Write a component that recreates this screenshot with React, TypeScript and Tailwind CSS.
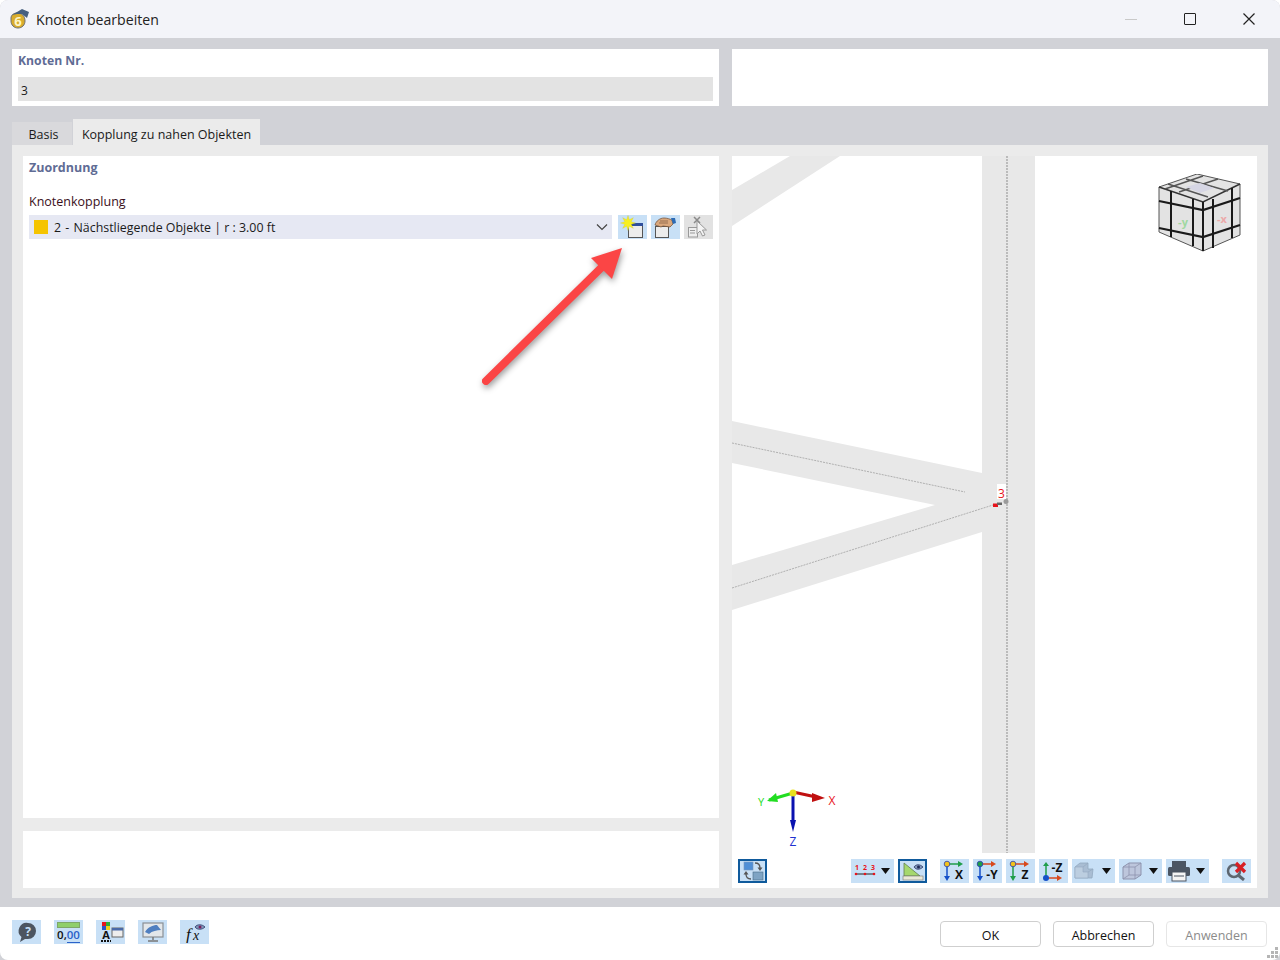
import React from 'react';

const FONT = 'font-["Open_Sans","Noto_Sans",sans-serif]';

const IconBtn = ({ children, w = 'w-[29px]', boxed = false, grey = false }: { children: React.ReactNode; w?: string; boxed?: boolean; grey?: boolean }) => (
  <div className={`${w} h-6 shrink-0 flex items-center justify-center ${grey ? 'bg-[#e2e2e2]' : 'bg-[#c8e0f6]'} ${boxed ? 'border-2 border-[#0f5a9c]' : ''}`}>
    {children}
  </div>
);

const Caret = () => (
  <svg width="9" height="6" viewBox="0 0 9 6" className="shrink-0">
    <path d="M0 0h9L4.500 6z" fill="#111" />
  </svg>
);

const AppLogo = () => (
  <svg width="22" height="22" viewBox="0 0 22 22" className="-ml-[1px]">
    <path d="M3 10c0-3 3-5 6-5 5 0 8 3 8 8 0 4-3 7-7 7-4 0-7-3-7-7z" fill="#d9ad2c" stroke="#6f6f6f" strokeWidth="1" />
    <path d="M4 7 L14 1 L21 4 L19 10 L14 6 L9 6 Z" fill="#47607f" />
    <text x="10" y="18" textAnchor="middle" fontSize="13" fontWeight="700" fill="#fff6c8" fontFamily="Open Sans">6</text>
  </svg>
);

const NewIcon = () => (
  <svg width="29" height="24" viewBox="0 0 29 24">
    <rect x="10.500" y="8.500" width="14" height="14" fill="#ececec" stroke="#555" />
    <rect x="13" y="8" width="12" height="3" fill="#2f4f9c" />
    <path d="M17.500 8L13.200 9.300L15.300 13.300L11.300 11.200L10 15.500L8.700 11.200L4.700 13.300L6.800 9.300L2.500 8L6.800 6.700L4.700 2.700L8.700 4.800L10 .5L11.300 4.800L15.300 2.700L13.200 6.700Z" fill="#f8f020" stroke="#c9c230" strokeWidth=".3" />
  </svg>
);

const EditIcon = () => (
  <svg width="29" height="24" viewBox="0 0 29 24">
    <rect x="4.500" y="11.500" width="13" height="11" fill="#ececec" stroke="#555" />
    <path d="M4 10c1-4 5-7 9-7 3 0 6 1 8 2l1 4-3 3-7-1-2 1z" fill="#d9a77c" stroke="#6b4a32" strokeWidth=".7" />
    <path d="M8 8h9M9 6h8" stroke="#6b4a32" strokeWidth=".6" />
    <path d="M20 3h4l1 5-3 1z" fill="#2c6bb5" />
  </svg>
);

const DelIcon = () => (
  <svg width="29" height="24" viewBox="0 0 29 24">
    <path d="M10 2l6 6M16 2l-6 6" stroke="#8a8a8a" strokeWidth="1.500" />
    <rect x="4.500" y="12.500" width="9" height="9.500" fill="#eee" stroke="#999" />
    <path d="M6 15.500h5M6 18h5" stroke="#999" />
    <path d="M13 6l0 13 3-3 2.500 5 2.500-1-2.500-5h4z" fill="#f4f4f4" stroke="#999" />
  </svg>
);

// axis icon: origin dot, horizontal + vertical arrows and a letter
const AxisIcon = ({ label, up, dot, h, v }: { label: string; up?: boolean; dot: string; h: string; v: string }) => (
  <svg width="27" height="22" viewBox="1 0 27 22">
    {up ? (
      <>
        <path d="M7 18V5" stroke={v} strokeWidth="1.500" />
        <path d="M4 6l3-4 3 4z" fill={v} />
        <path d="M7 18h12" stroke={h} strokeWidth="1.500" />
        <path d="M18 15l5 3-5 3z" fill={h} />
        <circle cx="7" cy="18" r="3" fill={dot} />
      </>
    ) : (
      <>
        <path d="M7 4v14" stroke={v} strokeWidth="1.500" />
        <path d="M4 16l3 5 3-5z" fill={v} />
        <path d="M7 4h12" stroke={h} strokeWidth="1.500" />
        <path d="M18 1l5 3-5 3z" fill={h} />
        <circle cx="7" cy="4" r="2.800" fill={dot} stroke="#2a3fb0" strokeWidth=".8" />
      </>
    )}
    <text x={up ? 18 : 19} y={up ? 12 : 19} textAnchor="middle" fontSize="12" fontWeight="700" fill="#111" fontFamily="Open Sans">{label}</text>
  </svg>
);

const Viewport = () => (
  <svg className="absolute inset-0" width="525" height="732" viewBox="732 156 525 732">
    <g fill="#e8e8e8">
      <path d="M732 190L790 156H840L732 226Z" />
      <path d="M982 156H1035V853H982Z" />
      <path d="M732 421L982 473V532L732 610V565L935 505L732 463Z" />
    </g>
    <path d="M1007 156V853" stroke="#8d8d8d" strokeWidth="1" strokeDasharray="2 1" />
    <path d="M732 443L965 492" stroke="#b0b0b0" strokeWidth="1" strokeDasharray="2 1" />
    <path d="M732 588L993 505" stroke="#b0b0b0" strokeWidth="1" strokeDasharray="2 1" />
    <rect x="997" y="484" width="9" height="15" fill="#fff" />
    <text x="1001.500" y="498" textAnchor="middle" fontSize="12" fill="#e8141c" fontFamily="Open Sans">3</text>
    <rect x="993" y="503.500" width="5" height="3.500" fill="#e8141c" />
    <rect x="997" y="502.500" width="5" height="2.500" fill="#666" />
    <circle cx="1006" cy="501.500" r="2.500" fill="#9b9b9b" />
  </svg>
);

const Cube = () => (
  <svg className="absolute left-[426px] top-[18px]" width="84" height="80" viewBox="0 0 84 80">
    <path d="M1 13L39 0L82 10V61L45 77L1 58Z" fill="#e3e3e3" stroke="#555" strokeWidth="1" />
    <path d="M1 13L45 28L82 10" fill="none" stroke="#333" strokeWidth="1.500" />
    <path d="M10 10L50 23M28 5L70 17M21 18L60 5M7 15L45 2" stroke="#555" strokeWidth="1.400" />
    <path d="M28 13l14-4 14 5-14 5z" fill="#d6d6e4" />
    <path d="M13 17V63M35 25V72M45 28V77M55 25V74M74 14V64" stroke="#1a1a1a" strokeWidth="2" />
    <path d="M1 27L45 36L82 24M1 54L45 63L82 51" fill="none" stroke="#1a1a1a" strokeWidth="2.200" />
    <text x="25" y="52" textAnchor="middle" fontSize="11" fontWeight="700" fill="#9fd8a0" fontFamily="Open Sans">-y</text>
    <text x="64" y="49" textAnchor="middle" fontSize="11" fontWeight="700" fill="#eca9a9" fontFamily="Open Sans">-x</text>
  </svg>
);

const AxisCross = () => (
  <svg className="absolute left-[22px] top-[628px]" width="90" height="68" viewBox="0 0 90 68">
    <path d="M39 9L15 16" stroke="#22dd22" strokeWidth="3" />
    <path d="M22 9L13 17L24 18Z" fill="#22dd22" />
    <path d="M39 8L62 13" stroke="#c01010" strokeWidth="3" />
    <path d="M58 9L71 14L58 18Z" fill="#c01010" />
    <path d="M39 9V40" stroke="#0a12b0" strokeWidth="3" />
    <path d="M36 36L39 48L42 36Z" fill="#0a12b0" />
    <circle cx="39" cy="9" r="3.500" fill="#e8e020" />
    <text x="7" y="22" textAnchor="middle" fontSize="11" fill="#22dd22" fontFamily="Open Sans">Y</text>
    <text x="78" y="21" textAnchor="middle" fontSize="12" fill="#e8141c" fontFamily="Open Sans">X</text>
    <text x="39" y="62" textAnchor="middle" fontSize="12" fill="#2030d0" fontFamily="Open Sans">Z</text>
  </svg>
);

const Toolbar = () => (
  <div className="absolute left-[6px] bottom-[5px] flex items-center">
    <IconBtn boxed>
      <svg width="24" height="20" viewBox="0 0 24 20">
        <rect x="3" y="1" width="9" height="8" fill="#4f8fd6" stroke="#7a98bd" strokeWidth=".6" />
        <rect x="12" y="11" width="10" height="8" fill="#7fa4c4" stroke="#496b88" strokeWidth=".6" />
        <path d="M14 2c4 0 5 2 5 5" fill="none" stroke="#555" strokeWidth="1.300" />
        <path d="M16.500 6.500h5L19 10z" fill="#555" />
        <path d="M10 18c-4 0-5-2-5-5" fill="none" stroke="#555" strokeWidth="1.300" />
        <path d="M2.500 13.500h5L5 10z" fill="#555" />
      </svg>
    </IconBtn>
    <div className="ml-[84px]">
      <IconBtn w="w-[43px]">
        <div className="flex items-center gap-[5px] pr-[2px]">
          <svg width="22" height="14" viewBox="0 0 22 14">
            <path d="M1 10h20" stroke="#222" />
            <circle cx="2" cy="10" r="1.300" fill="#e8141c" />
            <circle cx="11" cy="10" r="1.300" fill="#e8141c" />
            <circle cx="20" cy="10" r="1.300" fill="#e8141c" />
            <text x="3" y="6" textAnchor="middle" fontSize="7" fontWeight="700" fill="#e8141c">1</text>
            <text x="11" y="6" textAnchor="middle" fontSize="7" fontWeight="700" fill="#e8141c">2</text>
            <text x="19" y="6" textAnchor="middle" fontSize="7" fontWeight="700" fill="#e8141c">3</text>
          </svg>
          <Caret />
        </div>
      </IconBtn>
    </div>
    <div className="ml-1">
      <IconBtn boxed>
        <svg width="24" height="20" viewBox="0 0 24 20">
          <path d="M3 2L19 15H3Z" fill="#a5d86e" stroke="#5f7f50" strokeWidth=".8" />
          <rect x="2" y="15" width="20" height="4" fill="#e9e9d8" stroke="#777" strokeWidth=".6" />
          <path d="M13 6c2-3 6-3 9 0-3 3-7 3-9 0z" fill="#8095b8" stroke="#2a3a6a" strokeWidth=".8" />
          <circle cx="17.500" cy="6" r="1.500" fill="#1e2a55" />
        </svg>
      </IconBtn>
    </div>
    <div className="ml-[13px] flex gap-1">
      <IconBtn><AxisIcon label="X" dot="#f2c21a" h="#1f9e4a" v="#1450c8" /></IconBtn>
      <IconBtn><AxisIcon label="-Y" dot="#1f9e4a" h="#d8481c" v="#1450c8" /></IconBtn>
      <IconBtn><AxisIcon label="Z" dot="#f2c21a" h="#d8481c" v="#1f9e4a" /></IconBtn>
      <IconBtn><AxisIcon label="-Z" up dot="#1450c8" h="#d8481c" v="#1f9e4a" /></IconBtn>
      <IconBtn w="w-[43px]">
        <div className="flex items-center gap-[5px] pr-1">
          <svg width="24" height="20" viewBox="0 0 24 20">
            <path d="M2 6l5-4h8v6h5l-1 9H2z" fill="#a9bdd3" stroke="#93a9c0" strokeWidth=".8" />
            <path d="M2 6h8v5h5v6H2z" fill="#bccee0" stroke="#93a9c0" strokeWidth=".6" />
            <path d="M10 6l5-4M15 11l5-3" stroke="#93a9c0" strokeWidth=".7" />
          </svg>
          <Caret />
        </div>
      </IconBtn>
      <IconBtn w="w-[43px]">
        <div className="flex items-center gap-[5px] pr-1">
          <svg width="24" height="20" viewBox="0 0 24 20">
            <path d="M3 6l6-4h12v12l-6 4H3z" fill="#bdc6dc" stroke="#8d93ad" />
            <path d="M3 6h12v12M15 6l6-4M3 18l6-4h12M9 2v12" fill="none" stroke="#8d93ad" strokeWidth=".8" />
          </svg>
          <Caret />
        </div>
      </IconBtn>
      <IconBtn w="w-[43px]">
        <div className="flex items-center gap-[5px] pr-1">
          <svg width="24" height="22" viewBox="0 0 24 22">
            <rect x="5" y="1" width="14" height="6" fill="#4b5563" />
            <rect x="1" y="7" width="22" height="9" rx="1.500" fill="#4b5563" />
            <rect x="5" y="12" width="14" height="9" fill="#f5f5f5" stroke="#4b5563" />
            <path d="M7 16h10" stroke="#4b5563" />
          </svg>
          <Caret />
        </div>
      </IconBtn>
    </div>
    <div className="ml-[13px]">
      <IconBtn>
        <svg width="24" height="20" viewBox="0 0 24 20">
          <circle cx="9" cy="10" r="6" fill="none" stroke="#5d6670" strokeWidth="2.500" />
          <path d="M13 14l6 5" stroke="#5d6670" strokeWidth="3" />
          <path d="M11 2l9 9M20 2l-9 9" stroke="#d81f26" strokeWidth="3.200" />
        </svg>
      </IconBtn>
    </div>
  </div>
);

const Arrow = () => (
  <svg className="absolute left-[470px] top-[240px] pointer-events-none drop-shadow-[1px_3px_3px_rgba(0,0,0,0.4)]" width="170" height="155" viewBox="470 240 170 155">
    <path d="M486 381L603 266" stroke="#fb4545" strokeWidth="8" strokeLinecap="round" />
    <path d="M622 248L612 279L591 258Z" fill="#fb4545" />
  </svg>
);

const DialogButton = ({ children, disabled }: { children: React.ReactNode; disabled?: boolean }) => (
  <button className={`w-[101px] h-[26px] pt-1 rounded-[4px] border text-[12.500px] bg-white ${disabled ? 'border-[#e6e6e6] text-[#8b8b8b]' : 'border-[#cfcfcf] text-[#111]'}`}>
    {children}
  </button>
);

export default function App() {
  return (
    <div className={`${FONT} relative w-[1280px] h-[960px] flex flex-col overflow-hidden rounded-t-lg bg-[#d1d2d7] text-[13px] text-[#1a1a1a]`}>
      {/* Title bar */}
      <div className="h-[38px] shrink-0 bg-[#f3f4f9] flex items-center pl-[9px] pr-[2px]">
        <AppLogo />
        <span className="ml-[6px] pt-[1px] text-[14.100px] text-[#222]">Knoten bearbeiten</span>
        <div className="ml-auto flex items-center text-[#222]">
          <div className="w-[59px] flex justify-center">
            <div className="w-3 h-px bg-[#c9c9c9]" />
          </div>
          <div className="w-[59px] flex justify-center">
            <div className="w-3 h-3 border-[1.5px] border-[#222] rounded-[1px]" />
          </div>
          <div className="w-[59px] flex justify-center">
            <svg width="12" height="12" viewBox="0 0 12 12">
              <path d="M.5.5l11 11M11.500.5l-11 11" stroke="#222" strokeWidth="1.200" />
            </svg>
          </div>
        </div>
      </div>

      {/* Body */}
      <div className="flex-1 min-h-0 flex flex-col px-3 pt-[11px] pb-[9px]">
        <div className="h-[57px] shrink-0 flex gap-[13px]">
          <div className="w-[707px] bg-white px-[6px] pt-[3px]">
            <div className="h-[18px] leading-[18px] font-bold text-[12.200px] text-[#5f6c95]">Knoten Nr.</div>
            <div className="mt-[7px] h-6 leading-[27px] bg-[#e3e3e3] px-[3px] text-[12px]">3</div>
          </div>
          <div className="flex-1 bg-white" />
        </div>

        {/* Tabs */}
        <div className="h-[26px] mt-[13px] shrink-0 flex items-end text-[12.500px]">
          <div className="w-[60px] h-[23px] leading-[25px] bg-[#d9d9dc] text-center pl-[3px]">Basis</div>
          <div className="ml-[1px] w-[187px] h-[26px] leading-[31px] bg-[#ebebeb] text-center">Kopplung zu nahen Objekten</div>
        </div>

        <div className="flex-1 min-h-0 bg-[#ebebeb] pl-[11px] pr-[11px] pt-[11px] pb-[10px] flex gap-[13px]">
          <div className="w-[696px] flex flex-col gap-[13px]">
            <div className="flex-1 bg-white pl-[6px] pr-[6px]">
              <div className="h-6 leading-[23px] font-bold text-[12.500px] text-[#5f6c95]">Zuordnung</div>
              <div className="mt-[11px] h-[21px] leading-[21px] text-[12.500px] text-[#3a0f1a]">Knotenkopplung</div>
              <div className="mt-[3px] flex items-center">
                <div className="w-[583px] h-6 bg-[#e6e8f3] flex items-center pl-[5px] pr-[4px]">
                  <div className="w-[14px] h-[14px] bg-[#f5c400]" />
                  <span className="ml-[6px] pt-[2px] text-[12.400px] whitespace-pre"><span className="[word-spacing:1px]">2 - </span>Nächstliegende Objekte | r : 3.00 ft</span>
                  <svg className="ml-auto" width="12" height="8" viewBox="0 0 12 8">
                    <path d="M1 1.500l5 5 5-5" fill="none" stroke="#444" strokeWidth="1.200" />
                  </svg>
                </div>
                <div className="ml-[6px] flex gap-1">
                  <IconBtn><NewIcon /></IconBtn>
                  <IconBtn><EditIcon /></IconBtn>
                  <IconBtn grey><DelIcon /></IconBtn>
                </div>
              </div>
            </div>
            <div className="h-[57px] shrink-0 bg-white" />
          </div>
          <div className="relative flex-1 bg-white overflow-hidden">
            <Viewport />
            <Cube />
            <AxisCross />
            <Toolbar />
          </div>
        </div>
      </div>

      {/* Footer */}
      <div className="h-[53px] shrink-0 bg-white flex items-center pl-3 pr-[13px] rounded-b-lg">
        <div className="flex gap-[13px] -mt-[3px]">
          <IconBtn>
            <svg width="22" height="22" viewBox="0 0 22 22">
              <path d="M12 2a8 8 0 0 1 0 16H9l-5 3 1.500-5A8 8 0 0 1 12 2z" fill="#4d5560" />
              <text x="12" y="15" textAnchor="middle" fontSize="12" fontWeight="700" fill="#c8e0f6" fontFamily="Open Sans">?</text>
            </svg>
          </IconBtn>
          <IconBtn>
            <div className="w-[26px] flex flex-col items-center">
              <div className="w-[23px] h-[6px] bg-[#8fcf6a] border border-[#7ea768]" />
              <div className="text-[11.500px] leading-[14px] font-semibold text-[#111]">0,<span className="text-[#2b62c9] border-b border-[#2b62c9]">00</span></div>
            </div>
          </IconBtn>
          <IconBtn>
            <svg width="26" height="22" viewBox="0 0 26 22">
              <rect x="4" y="1" width="4" height="4" fill="#e8141c" />
              <rect x="8" y="1" width="4" height="4" fill="#2fae3a" />
              <rect x="4" y="5" width="4" height="4" fill="#2c55c8" />
              <rect x="8" y="5" width="4" height="4" fill="#f2d21a" />
              <text x="8" y="18" textAnchor="middle" fontSize="11" fontWeight="700" fill="#111" fontFamily="Open Sans">A</text>
              <rect x="14" y="7" width="11" height="9" fill="#eee" stroke="#666" />
              <rect x="14" y="7" width="11" height="2.500" fill="#4a6aa8" />
              <path d="M3 20h10" stroke="#111" strokeWidth="2" strokeDasharray="2 1" />
            </svg>
          </IconBtn>
          <IconBtn>
            <svg width="26" height="22" viewBox="0 0 26 22">
              <rect x="3" y="2" width="20" height="14" fill="#e3e7ea" stroke="#8a8f94" strokeWidth="1.200" />
              <path d="M5 11c3-5 8-7 12-7l4 5c-4 0-9 1-12 4z" fill="#4f7fc0" />
              <path d="M13 16v3M8 20h10" stroke="#777" strokeWidth="1.500" />
            </svg>
          </IconBtn>
          <IconBtn>
            <svg width="26" height="22" viewBox="0 0 26 22">
              <text x="4" y="19" fontSize="17" fontStyle="italic" fill="#111" fontFamily="Liberation Serif">f</text>
              <text x="11" y="19" fontSize="14" fontStyle="italic" fill="#111" fontFamily="Liberation Serif">x</text>
              <path d="M13 6c2-3 7-3 10 0-3 3-8 3-10 0z" fill="#8095b8" stroke="#2a3a6a" strokeWidth=".8" />
              <circle cx="18" cy="6" r="1.500" fill="#7a1f5c" />
            </svg>
          </IconBtn>
        </div>
        <div className="ml-auto flex gap-3 mt-[1px]">
          <DialogButton>OK</DialogButton>
          <DialogButton>Abbrechen</DialogButton>
          <DialogButton disabled>Anwenden</DialogButton>
        </div>
      </div>

      {/* Resize grip */}
      <svg className="absolute right-[1px] bottom-[1px]" width="12" height="12" viewBox="0 0 12 12">
        <g fill="#b5b5b5">
          <rect x="8" y="0" width="3" height="3" />
          <rect x="4" y="4" width="3" height="3" />
          <rect x="8" y="4" width="3" height="3" />
          <rect x="0" y="8" width="3" height="3" />
          <rect x="4" y="8" width="3" height="3" />
          <rect x="8" y="8" width="3" height="3" />
        </g>
      </svg>

      <Arrow />
    </div>
  );
}
